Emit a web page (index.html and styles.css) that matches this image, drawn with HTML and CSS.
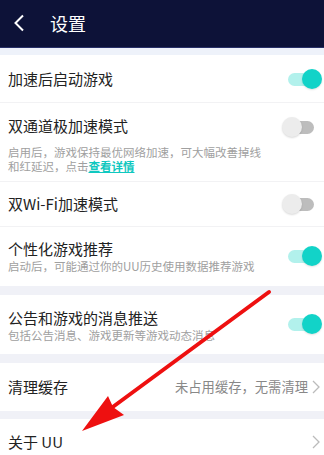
FILE: index.html
```html
<!DOCTYPE html>
<html lang="zh">
<head>
<meta charset="utf-8">
<link rel="stylesheet" href="styles.css">
</head>
<body>
<div class="page">
  <header class="topbar">
    <svg class="back" width="12" height="18" viewBox="0 0 12 18"><path d="M10 1.5 L2.5 9 L10 16.5" fill="none" stroke="#fff" stroke-width="2"/></svg>
    <span class="title">设置</span>
  </header>
  <div class="gap gap-top"></div>
  <section class="group">
    <div class="row r1">
      <div class="txt"><div class="name">加速后启动游戏</div></div>
      <div class="toggle on"><span class="track"></span><span class="knob"></span></div>
    </div>
    <div class="row r2">
      <div class="txt">
        <div class="name">双通道极加速模式</div>
        <div class="desc d2">启用后，游戏保持最优网络加速，可大幅改善掉线<br>和红延迟，点击<a class="link">查看详情</a></div>
      </div>
      <div class="toggle off top"><span class="track"></span><span class="knob"></span></div>
    </div>
    <div class="row r3">
      <div class="txt"><div class="name">双Wi-Fi加速模式</div></div>
      <div class="toggle off"><span class="track"></span><span class="knob"></span></div>
    </div>
    <div class="row r4 last">
      <div class="txt">
        <div class="name">个性化游戏推荐</div>
        <div class="desc">启动后，可能通过你的UU历史使用数据推荐游戏</div>
      </div>
      <div class="toggle on"><span class="track"></span><span class="knob"></span></div>
    </div>
  </section>
  <div class="gap"></div>
  <section class="group">
    <div class="row r5 last">
      <div class="txt">
        <div class="name">公告和游戏的消息推送</div>
        <div class="desc">包括公告消息、游戏更新等游戏动态消息</div>
      </div>
      <div class="toggle on"><span class="track"></span><span class="knob"></span></div>
    </div>
  </section>
  <div class="gap"></div>
  <section class="group">
    <div class="row r6 last">
      <div class="txt"><div class="name">清理缓存</div></div>
      <div class="extra">未占用缓存，无需清理<svg class="chev" width="8" height="14" viewBox="0 0 8 14"><path d="M1 1 L7 7 L1 13" fill="none" stroke="#bbb" stroke-width="1.3"/></svg></div>
    </div>
  </section>
  <div class="gap g2"></div>
  <section class="group">
    <div class="row r7 last">
      <div class="txt"><div class="name">关于 UU</div></div>
      <div class="extra"><svg class="chev" width="8" height="14" viewBox="0 0 8 14"><path d="M1 1 L7 7 L1 13" fill="none" stroke="#bbb" stroke-width="1.3"/></svg></div>
    </div>
  </section>
  <svg class="arrow" width="324" height="455" viewBox="0 0 324 455">
    <line x1="269" y1="292" x2="110" y2="409" stroke="#ee1010" stroke-width="4" stroke-linecap="round"/>
    <polygon points="82,431 108,396 113,407 124,415" fill="#ee1010"/>
  </svg>
</div>
</body>
</html>
```
FILE: styles.css
```css
* { box-sizing: border-box; }
html, body { margin: 0; padding: 0; }
body {
  width: 324px;
  height: 455px;
  overflow: hidden;
  background: #ffffff;
  font-family: "Noto Sans CJK SC", "Noto Sans", sans-serif;
  color: #222;
}
.page { position: relative; width: 324px; height: 455px; overflow: hidden; }
.topbar {
  height: 48px;
  background: #0d1238;
  border-bottom: 1px solid #283068;
  display: flex;
  align-items: center;
}
.back { margin-left: 13px; margin-top: -1px; }
.title {
  margin-left: 25px;
  color: #fff;
  font-size: 18px;
  line-height: 24px;
  margin-top: -2px;
}
.gap { height: 9px; background: #f0f1f7; }
.gap-top { height: 7px; background: #eef2fa; }
.g2 { height: 8px; }
.group { background: #fff; }
.row {
  display: flex;
  align-items: center;
  justify-content: space-between;
  padding: 0 2px 0 8px;
  border-bottom: 1px solid #f2f2f4;
}
.row.last { border-bottom: none; }
.name { font-size: 15px; line-height: 22px; color: #222; }
.desc { font-size: 11.5px; line-height: 13.5px; color: #a0a0a0; }
.d2 { margin-top: 9px; }
.link { color: #10c8c0; font-weight: bold; text-decoration: underline; }
.r1 { height: 48px; }
.r2 { padding-top: 12px; padding-bottom: 8px; align-items: flex-start; }
.r2 .toggle { margin-top: 2px; }
.r3 { height: 45px; }
.r4 { padding-top: 11px; padding-bottom: 12px; }
.r5 { padding-top: 12px; padding-bottom: 12px; }
.r6 { height: 48px; }
.r7 { height: 46px; }
.toggle { position: relative; width: 40px; height: 20px; flex: none; }
.toggle .track {
  position: absolute; left: 6px; right: 8px; top: 4px; height: 13px;
  border-radius: 7px;
}
.toggle .knob {
  position: absolute; top: 0; width: 20px; height: 20px; border-radius: 50%;
}
.toggle.on .track { background: #b2f1ec; }
.toggle.on .knob { right: 0; background: #12d3c8; box-shadow: 0 1px 2px rgba(0,0,0,0.12); }
.toggle.off .track { background: #bdbdbd; }
.toggle.off .knob { left: 0; background: #ececec; box-shadow: 0 1px 2px rgba(0,0,0,0.15); }
.extra {
  display: flex; align-items: center;
  font-size: 13.3px; color: #888; line-height: 20px;
  margin-right: 2px;
}
.chev { margin-left: 4px; }
.arrow { position: absolute; left: 0; top: 0; pointer-events: none; }
```
